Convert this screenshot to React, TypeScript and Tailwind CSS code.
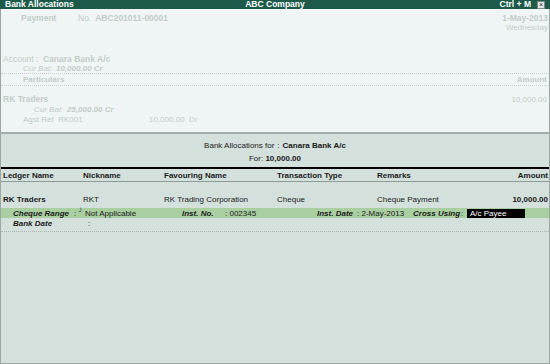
import React from "react";

const faded = "text-[#c3ccc9]";

export default function App() {
  return (
    <div
      className="w-[550px] h-[364px] flex flex-col text-[8px] leading-[9px] text-[#1a1a1a] overflow-hidden whitespace-nowrap"
      style={{ fontFamily: '"Liberation Sans", Arial, sans-serif' }}
    >
      {/* Title bar */}
      <div className="h-[9px] bg-[#1d5a4a] bg-[radial-gradient(#2b6d5b_0.6px,transparent_0.7px)] bg-[length:2px_2px] grid grid-cols-[1fr_auto_1fr] items-center text-white font-bold px-[5px] text-[8.5px]">
        <div>Bank Allocations</div>
        <div>ABC Company</div>
        <div className="flex justify-end items-center gap-[6px]">
          <span>Ctrl + M</span>
          <span className="w-[8px] h-[8px] bg-[#dfe3e2] border border-[#7a8783] text-[#333] text-[7px] leading-[6px] flex items-center justify-center font-normal">
            ×
          </span>
        </div>
      </div>

      {/* Top (voucher) panel */}
      <div className="h-[123px] bg-[#eef5f4] border-x border-[#9ca6a3] flex flex-col">
        <div className={`h-[9px] mt-[5px] flex items-center ${faded} font-bold text-[8.5px]`}>
          <span className="ml-[20px] w-[57px]">Payment</span>
          <span className="font-normal">No.</span>
          <span className="ml-[4px]">ABC201011-00001</span>
          <span className="ml-auto mr-[1px]">1-May-2013</span>
        </div>
        <div className={`h-[9px] flex items-center justify-end pr-[1px] ${faded}`}>Wednesday</div>
        <div className={`h-[9px] mt-[23px] flex items-center ${faded} text-[8.5px]`}>
          <span className="ml-[2px] w-[40px]">Account :</span>
          <span className="font-bold">Canara Bank A/c</span>
        </div>
        <div className={`h-[9px] flex items-center italic ${faded}`}>
          <span className="ml-[22px] w-[33px]">Cur Bal:</span>
          <span className="font-bold">10,000.00 Cr</span>
        </div>
        <div className="border-t border-dotted border-[#c9d1cf]" />
        <div className={`h-[9px] mt-[1px] flex items-center ${faded} font-bold`}>
          <span className="ml-[22px]">Particulars</span>
          <span className="ml-auto mr-[2px]">Amount</span>
        </div>
        <div className="border-t border-dotted border-[#c9d1cf] mt-[1px]" />
        <div className={`h-[9px] mt-[9px] flex items-center ${faded} font-bold text-[8.5px]`}>
          <span className="ml-[2px]">RK Traders</span>
          <span className="ml-auto mr-[2px] font-normal text-[8px]">10,000.00</span>
        </div>
        <div className={`h-[9px] mt-[1px] flex items-center italic ${faded}`}>
          <span className="ml-[33px] mr-[4px]">Cur Bal:</span>
          <span className="font-bold">25,000.00 Cr</span>
        </div>
        <div className={`h-[9px] mt-[1px] flex items-center ${faded}`}>
          <span className="ml-[22px] w-[126px]">Agst Ref&nbsp; RK001</span>
          <span>10,000.00&nbsp; Dr</span>
        </div>
      </div>

      {/* Bottom (allocation) panel */}
      <div className="flex-1 bg-[#d4e0dc] border-t-2 border-[#a3aeaa] border-x border-b border-x-[#9ca6a3] border-b-[#9ca6a3] flex flex-col">
        <div className="h-[9px] mt-[7px] flex items-center justify-center">
          <span>Bank Allocations for</span>
          <span className="mx-[3px]">:</span>
          <span className="font-bold">Canara Bank A/c</span>
        </div>
        <div className="h-[9px] mt-[4px] flex items-center justify-center">
          <span>For:&nbsp;</span>
          <span className="font-bold">10,000.00</span>
        </div>
        <div className="mt-[4px] border-t-2 border-black" />
        <div className="h-[12px] grid grid-cols-[80px_81px_113px_100px_1fr] items-center font-bold pl-[2px] pr-[1px]">
          <span>Ledger Name</span>
          <span>Nickname</span>
          <span>Favouring Name</span>
          <span>Transaction Type</span>
          <span className="flex">
            <span>Remarks</span>
            <span className="ml-auto">Amount</span>
          </span>
        </div>
        <div className="border-t border-[#8e9a96]" />
        <div className="h-[9px] mt-[13px] grid grid-cols-[80px_81px_113px_100px_1fr] items-center pl-[2px] pr-[1px]">
          <span className="font-bold">RK Traders</span>
          <span>RKT</span>
          <span>RK Trading Corporation</span>
          <span>Cheque</span>
          <span className="flex">
            <span>Cheque Payment</span>
            <span className="ml-auto font-bold">10,000.00</span>
          </span>
        </div>
        <div className="h-[10px] mt-[4px] bg-[#a9cfa1] flex items-center pl-[12px]">
          <span className="w-[61px] italic font-bold">Cheque Range</span>
          <span className="w-[108px]">:&nbsp;<sup className="text-[6px]">┘</sup>&nbsp;Not Applicable</span>
          <span className="w-[43px] italic font-bold">Inst. No.</span>
          <span className="w-[92px]">: 002345</span>
          <span className="w-[40px] italic font-bold">Inst. Date</span>
          <span className="w-[56px]">: 2-May-2013</span>
          <span className="w-[48px] italic font-bold">Cross Using</span>
          <span className="w-[6px]">:</span>
          <span className="w-[58px] h-[9px] bg-black text-white pl-[3px] flex items-center">A/c Payee</span>
        </div>
        <div className="h-[10px] flex items-center pl-[12px]">
          <span className="w-[75px] italic font-bold">Bank Date</span>
          <span>:</span>
        </div>
        <div className="mt-[3px] border-t border-dotted border-[#a6b3ae]" />
      </div>
    </div>
  );
}
